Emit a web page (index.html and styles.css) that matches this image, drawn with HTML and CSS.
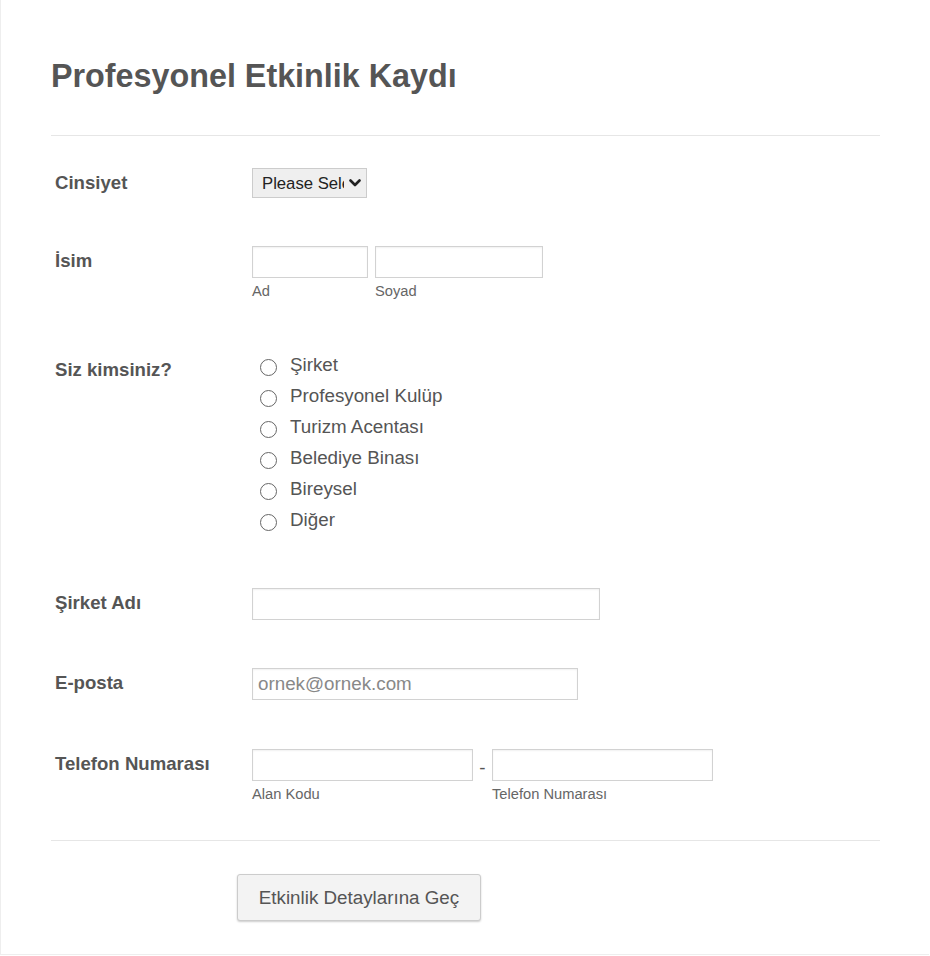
FILE: index.html
```html
<!DOCTYPE html>
<html lang="tr">
<head>
    <meta charset="UTF-8">
    <title>Profesyonel Etkinlik Kaydı</title>
    <meta name="viewport" content="width=device-width, initial-scale=1.0">
    <link rel="stylesheet" href="styles.css">
</head>
<body>
    <div class="form-all">
        <div class="form-header">
            <h1 class="form-title">Profesyonel Etkinlik Kaydı</h1>
        </div>
        <ul class="form-section">
            <li class="form-line line-first">
                <label class="form-label" for="cinsiyet">Cinsiyet</label>
                <div class="form-input">
                    <span class="select-wrap">
                        <select class="form-dropdown" id="cinsiyet" name="cinsiyet">
                            <option>Please Select</option>
                            <option>Kadın</option>
                            <option>Erkek</option>
                        </select>
                        <svg class="select-arrow" width="12" height="8" viewBox="0 0 12 8">
                            <path d="M1.5 1.5 L6 6 L10.5 1.5" fill="none" stroke="#222" stroke-width="2.6" stroke-linecap="round" stroke-linejoin="round"/>
                        </svg>
                    </span>
                </div>
            </li>
            <li class="form-line">
                <label class="form-label" for="ad">İsim</label>
                <div class="form-input name-fields">
                    <span class="sub-field">
                        <input type="text" id="ad" name="ad" class="form-textbox w-ad">
                        <label class="form-sub-label" for="ad">Ad</label>
                    </span>
                    <span class="sub-field">
                        <input type="text" id="soyad" name="soyad" class="form-textbox w-soyad">
                        <label class="form-sub-label" for="soyad">Soyad</label>
                    </span>
                </div>
            </li>
            <li class="form-line line-radio">
                <label class="form-label label-radio">Siz kimsiniz?</label>
                <div class="form-input radio-list">
                    <label class="radio-item"><input type="radio" name="kim" class="form-radio"><span>Şirket</span></label>
                    <label class="radio-item"><input type="radio" name="kim" class="form-radio"><span>Profesyonel Kulüp</span></label>
                    <label class="radio-item"><input type="radio" name="kim" class="form-radio"><span>Turizm Acentası</span></label>
                    <label class="radio-item"><input type="radio" name="kim" class="form-radio"><span>Belediye Binası</span></label>
                    <label class="radio-item"><input type="radio" name="kim" class="form-radio"><span>Bireysel</span></label>
                    <label class="radio-item"><input type="radio" name="kim" class="form-radio"><span>Diğer</span></label>
                </div>
            </li>
            <li class="form-line">
                <label class="form-label" for="sirket">Şirket Adı</label>
                <div class="form-input">
                    <input type="text" id="sirket" name="sirket" class="form-textbox w-sirket">
                </div>
            </li>
            <li class="form-line">
                <label class="form-label" for="eposta">E-posta</label>
                <div class="form-input">
                    <input type="email" id="eposta" name="eposta" class="form-textbox w-eposta" placeholder="ornek@ornek.com">
                </div>
            </li>
            <li class="form-line line-last">
                <label class="form-label" for="alan">Telefon Numarası</label>
                <div class="form-input phone-fields">
                    <span class="sub-field">
                        <input type="tel" id="alan" name="alan" class="form-textbox w-phone">
                        <label class="form-sub-label" for="alan">Alan Kodu</label>
                    </span>
                    <span class="phone-dash">-</span>
                    <span class="sub-field">
                        <input type="tel" id="telefon" name="telefon" class="form-textbox w-phone">
                        <label class="form-sub-label" for="telefon">Telefon Numarası</label>
                    </span>
                </div>
            </li>
        </ul>
        <div class="form-footer">
            <button type="button" class="form-submit">Etkinlik Detaylarına Geç</button>
        </div>
    </div>
</body>
</html>
```

FILE: styles.css
```css
body {
    margin: 0;
    background: #fff;
    font-family: "Liberation Sans", Arial, sans-serif;
    color: #555;
}
.form-all {
    width: 929px;
    border-left: 1px solid #eee;
    border-bottom: 1px solid #eee;
    padding: 0 49px 33px 50px;
    box-sizing: border-box;
}
.form-header {
    padding-top: 57px;
    padding-bottom: 40px;
    border-bottom: 1px solid #e6e6e6;
}
.form-title {
    margin: 0;
    font-size: 32.3px;
    line-height: 38px;
    font-weight: bold;
    color: #555;
}
.form-section {
    list-style: none;
    margin: 0;
    padding: 0 0 13px;
    border-bottom: 1px solid #e6e6e6;
}
.form-line {
    display: grid;
    grid-template-columns: 201px 1fr;
    padding: 24px 0;
}
.line-first {
    padding-top: 32px;
}
.line-radio {
    padding: 26px 0 28px;
}
.line-last {
    padding-top: 25px;
}
.form-label {
    padding-left: 4px;
    font-size: 18.6px;
    line-height: 30px;
    font-weight: bold;
    color: #555;
}
.label-radio {
    margin-top: 5px;
}
.form-input {
    display: flex;
    align-items: flex-start;
}
.select-wrap {
    position: relative;
    display: inline-block;
}
.form-dropdown {
    appearance: none;
    -webkit-appearance: none;
    width: 115px;
    height: 30px;
    margin: 0;
    padding: 0 22px 0 9px;
    border: 1px solid #ccc;
    border-radius: 0;
    background: #efefef;
    font-family: inherit;
    font-size: 16.7px;
    color: #222;
    box-sizing: border-box;
}
.select-arrow {
    position: absolute;
    right: 6px;
    top: 11px;
    pointer-events: none;
}
.form-textbox {
    height: 32px;
    margin: 0;
    padding: 0 5px;
    border: 1px solid #d2d2d2;
    border-radius: 0;
    box-shadow: inset 0 1px 2px rgba(0,0,0,0.06);
    box-sizing: border-box;
    font-family: inherit;
    font-size: 18.8px;
    color: #555;
    outline: none;
}
.form-textbox::placeholder {
    color: #888;
}
.w-ad { width: 116px; }
.w-soyad { width: 168px; }
.w-sirket { width: 348px; }
.w-eposta { width: 326px; }
.w-phone { width: 221px; }
.name-fields {
    gap: 7px;
}
.sub-field {
    display: flex;
    flex-direction: column;
}
.form-sub-label {
    margin-top: 5px;
    font-size: 14.7px;
    line-height: 17px;
    color: #666;
}
.phone-dash {
    width: 19px;
    text-align: center;
    font-size: 18.8px;
    line-height: 38px;
    color: #555;
}
.radio-list {
    flex-direction: column;
}
.radio-item {
    display: flex;
    align-items: flex-start;
    height: 31px;
    font-size: 18.8px;
    line-height: 30px;
    color: #555;
}
.form-radio {
    appearance: none;
    -webkit-appearance: none;
    width: 17px;
    height: 17px;
    margin: 9px 13px 0 8px;
    border: 1px solid #666;
    border-radius: 50%;
    background: #fff;
    flex-shrink: 0;
}
.form-radio:checked {
    background: radial-gradient(circle, #555 0 4px, #fff 4.5px);
}
.form-footer {
    padding: 33px 0 0 186px;
}
.form-submit {
    width: 244px;
    height: 47px;
    border: 1px solid #ccc;
    border-radius: 3px;
    background: #f3f3f3;
    box-shadow: 0 1px 2px rgba(0,0,0,0.2);
    font-family: inherit;
    font-size: 18.8px;
    color: #555;
    cursor: pointer;
}
.form-submit:hover {
    background: #eaeaea;
}
```
